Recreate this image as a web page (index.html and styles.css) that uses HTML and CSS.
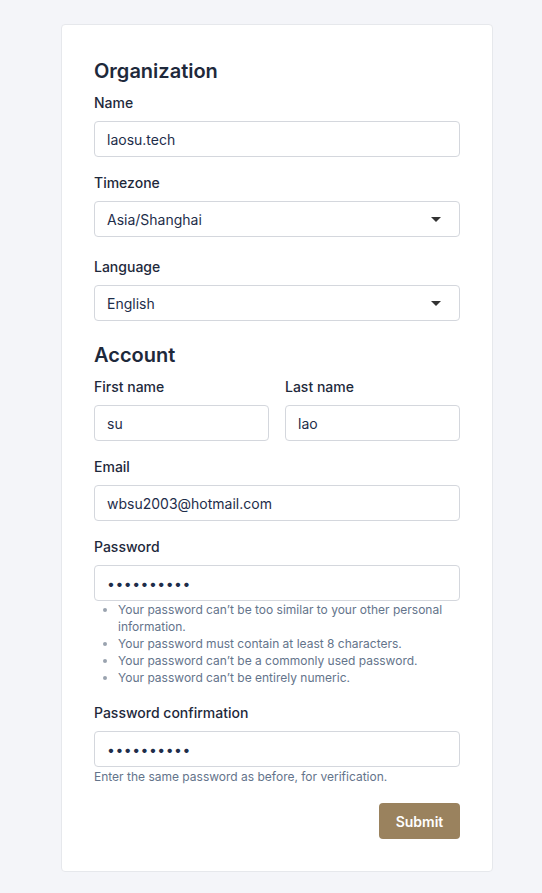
FILE: index.html
```html
<!DOCTYPE html>
<html lang="en">
<head>
<meta charset="utf-8">
<title>Setup</title>
<link rel="stylesheet" href="styles.css">
</head>
<body>
<main class="page">
  <form class="card">
    <h2 class="section-title">Organization</h2>
    <div class="field">
      <label class="label">Name</label>
      <div class="input">laosu.tech</div>
    </div>
    <div class="field field-select">
      <label class="label">Timezone</label>
      <div class="input select"><span>Asia/Shanghai</span><span class="caret"></span></div>
    </div>
    <div class="field field-select">
      <label class="label">Language</label>
      <div class="input select"><span>English</span><span class="caret"></span></div>
    </div>

    <h2 class="section-title second">Account</h2>
    <div class="row">
      <div class="field">
        <label class="label">First name</label>
        <div class="input">su</div>
      </div>
      <div class="field">
        <label class="label">Last name</label>
        <div class="input">lao</div>
      </div>
    </div>
    <div class="field">
      <label class="label">Email</label>
      <div class="input">wbsu2003@hotmail.com</div>
    </div>
    <div class="field field-list">
      <label class="label">Password</label>
      <div class="input dots">••••••••••</div>
      <ul class="help-list">
        <li>Your password can’t be too similar to your other personal information.</li>
        <li>Your password must contain at least 8 characters.</li>
        <li>Your password can’t be a commonly used password.</li>
        <li>Your password can’t be entirely numeric.</li>
      </ul>
    </div>
    <div class="field">
      <label class="label">Password confirmation</label>
      <div class="input dots">••••••••••</div>
      <p class="help">Enter the same password as before, for verification.</p>
    </div>
    <div class="actions">
      <button type="button" class="btn">Submit</button>
    </div>
  </form>
</main>
</body>
</html>
```

FILE: styles.css
```css
* { box-sizing: border-box; }
html, body { margin: 0; padding: 0; }
body {
  background: #f4f5f9;
  font-family: Inter, "Noto Sans", sans-serif;
  color: #1e293b;
}
.page {
  padding: 24px 0 0 61px;
}
.card {
  width: 432px;
  background: #fff;
  border: 1px solid #e6e8ec;
  border-radius: 4px;
  padding: 32px 32px 32px;
}
.section-title {
  margin: 0 0 8px;
  font-size: 20px;
  line-height: 28px;
  font-weight: 600;
  color: #1e293b;
}
.section-title.second { margin-top: 1px; }
.field {
  margin-bottom: 16px;
  flex: 1;
  min-width: 0;
}
.field-select { margin-bottom: 20px; }
.field-list { margin-bottom: 17px; }
.label {
  display: block;
  font-size: 14px;
  line-height: 20px;
  font-weight: 500;
  color: #1e293b;
  margin-bottom: 8px;
}
.input {
  height: 36px;
  border: 1px solid #d4d7dd;
  border-radius: 4px;
  padding: 0 12px;
  display: flex;
  align-items: center;
  font-size: 14px;
  color: #1e2d4a;
  background: #fff;
}
.select { justify-content: space-between; padding-right: 18px; }
.caret {
  width: 0;
  height: 0;
  border-left: 5px solid transparent;
  border-right: 5px solid transparent;
  border-top: 5px solid #333;
}
.dots {
  font-size: 14px;
  letter-spacing: 0.5px;
  color: #1e2d4a;
}
.row {
  display: flex;
  gap: 16px;
}
.help-list {
  margin: 0;
  padding: 0 0 0 24px;
  font-size: 12px;
  line-height: 17px;
  color: #64748b;
}
.help-list li::marker { color: #9aa3af; }
.help {
  margin: 1px 0 0;
  font-size: 12px;
  line-height: 18px;
  color: #64748b;
}
.actions {
  display: flex;
  justify-content: flex-end;
  padding-top: 1px;
}
.btn {
  height: 36px;
  width: 81px;
  border: none;
  border-radius: 4px;
  background: #9a825e;
  color: #fff;
  font-family: Inter, "Noto Sans", sans-serif;
  font-size: 14px;
  font-weight: 600;
}
```
